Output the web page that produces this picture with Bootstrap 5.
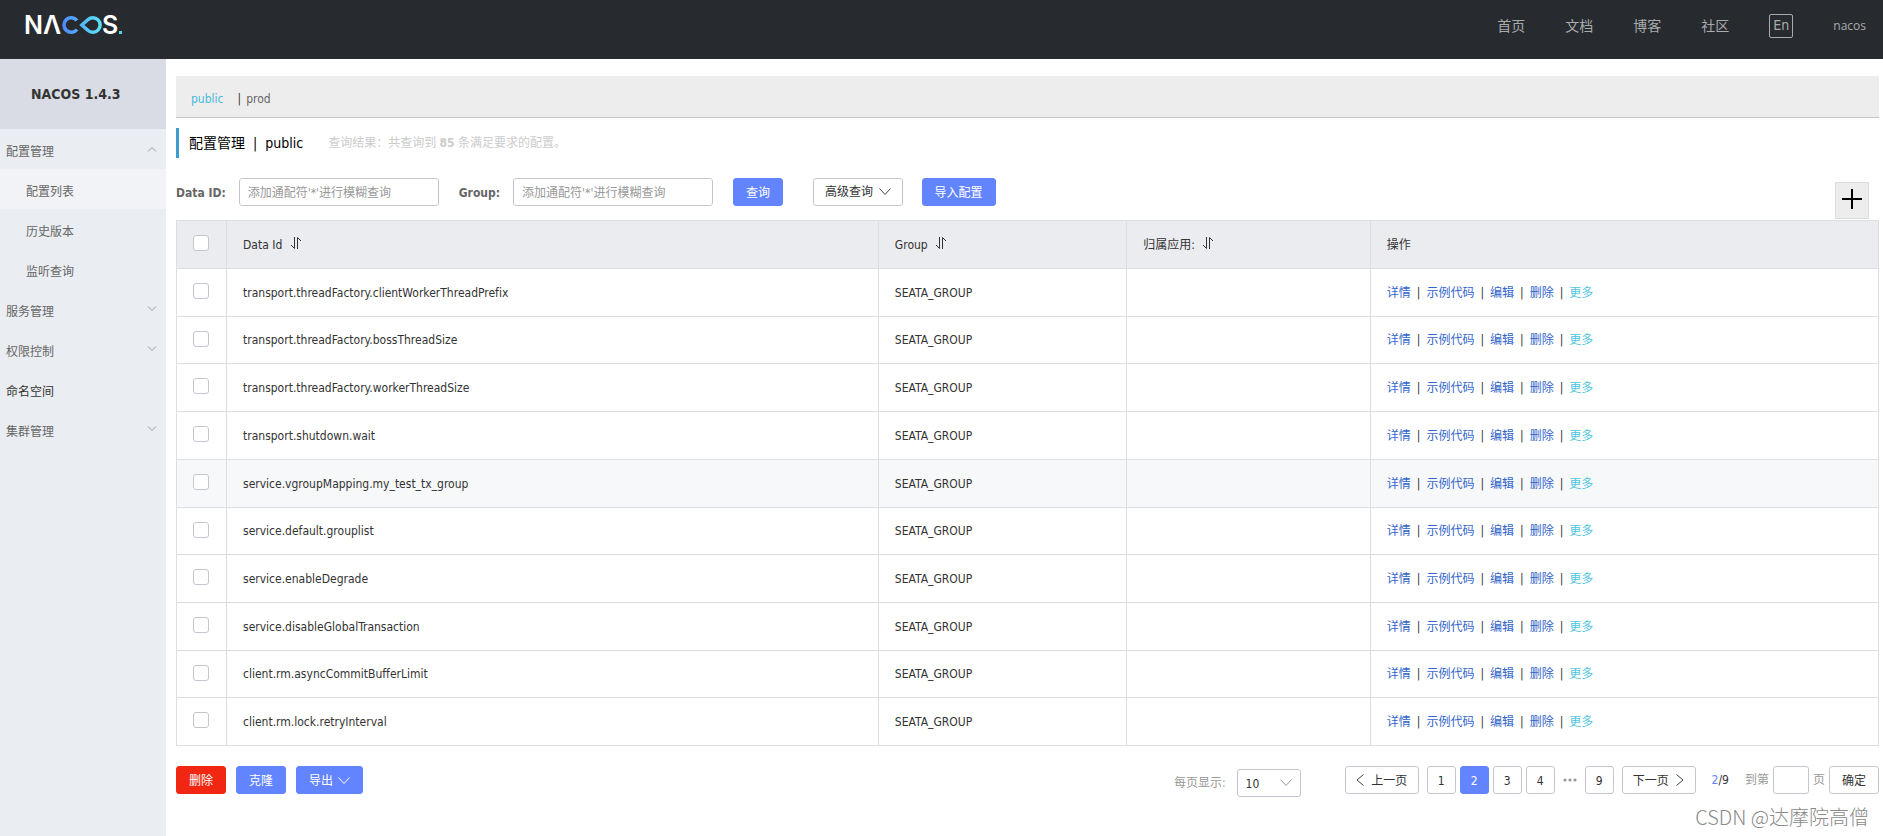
<!DOCTYPE html>
<html lang="zh-CN">
<head>
<meta charset="utf-8">
<meta name="viewport" content="width=device-width, initial-scale=1">
<title>Nacos</title>
<link href="https://cdn.jsdelivr.net/npm/bootstrap@5.3.0/dist/css/bootstrap.min.css" rel="stylesheet">
<style>
  body { font-family: "DejaVu Sans Condensed", "Noto Sans CJK SC", sans-serif; font-size: 12px; line-height: 18px; color: #333; background: #fff; font-variant-ligatures: none; }
  a { text-decoration: none; }
  .site-header { background: #272a2f; height: 59px; padding: 0 17px 0 24px; }
  .site-nav { gap: 40px; height: 52px; font-size: 14px; }
  .site-nav a { color: #a9aaac; }
  .site-nav .lang { border: 1px solid #a9aaac; border-radius: 2px; width: 24px; height: 24px; line-height: 20px; text-align: center; }
  .site-nav .user { font-size: 12px; font-family: "Open Sans", sans-serif; }
  .side { width: 166px; background: #eaedf1; }
  .side-title { height: 70px; line-height: 70px; background: #d9dce4; font-size: 14px; font-weight: 700; padding-left: 31px; margin: 0; }
  .side a { height: 40px; padding: 6px 9px 0 6px; color: #666; }
  .side a.child { padding-left: 26px; }
  .side a.current { background: #f1f3f7; }
  .side a.plain { color: #333; }
  .side svg { margin-bottom: 6px; }
  .work { padding: 17px 4px 0 10px; min-width: 0; }
  .ns-bar { background: #ededed; border-bottom: 1px solid #c8c8c8; height: 42px; padding: 5px 15px 0; }
  .ns-bar a { color: #666; }
  .ns-bar a.on { color: #49b9d8; margin-right: 14px; }
  .ns-bar span { margin-right: 5px; }
  .page-title { height: 30px; margin: 10px 0 20px; padding-left: 10px; border-left: 3px solid #3c9dce; color: #000; font-size: 14px; font-weight: 400; }
  .page-title small { color: #ccc; font-size: 12px; margin-left: 25px; }
  .filters { height: 42px; }
  .filters label { font-weight: 700; color: #666; padding-top: 2px; margin-right: 13px; }
  .ctl { height: 28px; border: 1px solid #c4c6cf; border-radius: 3px; padding: 2px 8px 0; font-size: 12px; line-height: 18px; color: #333; background-color: #fff; }
  .ctl:focus { box-shadow: none; border-color: #6384ff; }
  .ctl::placeholder { color: #999; opacity: 1; }
  input.term { width: 200px; margin-right: 20px; }
  .bt { height: 28px; border-radius: 3px; padding: 2px 12px 0; font-size: 12px; line-height: 18px; color: #333; background: #fff; border: 1px solid #c4c6cf; white-space: nowrap; }
  .bt.blue { background: #6384ff; border-color: #6384ff; color: #fff; }
  .bt.red { background: #f12714; border-color: #f12714; color: #fff; }
  .bt.adv { margin: 0 19px 0 30px; padding: 0 11px; }
  .bt.add { width: 34px; height: 37px; margin: 4px 10px 0 0; background: #ededed; border-color: #dcdcdc; border-radius: 0; padding: 0 0 3px; color: #000; }
  .chev { margin-left: 2px; margin-bottom: 2px; }
  .configs { table-layout: fixed; margin: 0; border-color: #dcdee3; color: #333; }
  .configs > :not(caption) > * > * { padding: 0 16px; height: 48px; box-shadow: none; vertical-align: middle; }
  .configs > tbody > tr:nth-child(4n+2):not(:last-child) > * { height: 47px; }
  .configs > tbody > tr:nth-child(9) > * { height: 47px; }
  .configs th { background: #ebecf0; font-weight: 400; }
  .configs > :not(caption) > * > .tick { padding: 0 1px 4px 0; text-align: center; }
  .configs tr.over td { background: #f7f8fa; }
  .configs .form-check-input { width: 16px; height: 16px; margin: 0; border: 1px solid #c4c6cf; border-radius: 3px; vertical-align: middle; }
  .configs .c-id { width: 38.3%; } .configs .c-group { width: 14.6%; } .configs .c-app { width: 14.3%; } .configs .c-tick { width: 50px; }
  .ops { gap: 6px; }
  .ops a { color: #3265cb; }
  .ops a.more { color: #52c5e0; }
  .foot { padding-top: 20px; }
  .bulk { gap: 10px; }
  .muted { color: #999; }
  .pg { gap: 4px; }
  .pg .num { width: 29px; padding: 2px 0 0; text-align: center; }
  .pg .step { width: 74px; padding: 2px 0 0; }
  .pg .ok { width: 50px; padding: 2px 0 0; }
  .pg .ctl { width: 36px; }
  .pg .now { color: #6384ff; }
  .size { margin: 3px 44px 0 0; }
  .size label { margin-right: 11px; }
  .size .ctl { width: 64px; appearance: none; background: #fff url("data:image/svg+xml,%3Csvg xmlns='http://www.w3.org/2000/svg' width='12' height='8' fill='none' stroke='%23999'%3E%3Cpath d='M.5 .5 6 6.500 11.500 .5'/%3E%3C/svg%3E") no-repeat right 8px center; }
  .credit { right: 14px; bottom: 4px; font-size: 20px; line-height: 30px; color: #8a8a8a; font-family: "Noto Sans CJK SC", sans-serif; font-weight: 300; }
</style>
</head>
<body>
<div class="d-flex flex-column min-vh-100 position-relative">
  <header class="site-header d-flex justify-content-between">
    <a href="#" aria-label="NACOS">
      <svg width="100" height="44" viewBox="0 0 100 44" font-family="Inter, sans-serif" font-weight="600" font-size="25">
        <defs><linearGradient id="loop" gradientUnits="userSpaceOnUse" x1="38" y1="0" x2="78" y2="0"><stop offset="0" stop-color="#4f86ff"/><stop offset="1" stop-color="#5be6f5"/></linearGradient></defs>
        <text x="0" y="34" fill="#fff">N</text>
        <text x="19" y="34" fill="#fff">Λ</text>
        <path d="M53 20.500A7.300 7.300 0 1 0 53 29.500M57.800 25L63.800 19.700A7.300 7.300 0 1 1 63.800 30.300Z" fill="none" stroke="url(#loop)" stroke-width="3.500"/>
        <text x="78" y="34" fill="#fff">S</text>
        <rect x="95" y="31" width="3" height="3" fill="#4fd6e8"/>
      </svg>
    </a>
    <nav class="site-nav d-flex align-items-center">
      <a href="#">首页</a><a href="#">文档</a><a href="#">博客</a><a href="#">社区</a>
      <a href="#" class="lang">En</a><a href="#" class="user">nacos</a>
    </nav>
  </header>
  <div class="d-flex flex-grow-1">
    <aside class="side flex-shrink-0">
      <h1 class="side-title">NACOS 1.4.3</h1>
      <nav>
        <a href="#" class="d-flex align-items-center justify-content-between">配置管理<svg width="10" height="6" fill="none" stroke="#999"><path d="M1 5.500 5 1.500 9 5.500"/></svg></a>
        <a href="#" class="d-flex align-items-center child current">配置列表</a>
        <a href="#" class="d-flex align-items-center child">历史版本</a>
        <a href="#" class="d-flex align-items-center child">监听查询</a>
        <a href="#" class="d-flex align-items-center justify-content-between">服务管理<svg width="10" height="6" fill="none" stroke="#999"><path d="M1 .5 5 4.500 9 .5"/></svg></a>
        <a href="#" class="d-flex align-items-center justify-content-between">权限控制<svg width="10" height="6" fill="none" stroke="#999"><path d="M1 .5 5 4.500 9 .5"/></svg></a>
        <a href="#" class="d-flex align-items-center plain">命名空间</a>
        <a href="#" class="d-flex align-items-center justify-content-between">集群管理<svg width="10" height="6" fill="none" stroke="#999"><path d="M1 .5 5 4.500 9 .5"/></svg></a>
      </nav>
    </aside>
    <main class="work flex-grow-1">
      <div class="ns-bar d-flex align-items-center">
        <a href="#" class="on">public</a><span>|</span><a href="#">prod</a>
      </div>
      <h2 class="page-title d-flex align-items-center">配置管理<span class="mx-2">|</span>public<small>查询结果：共查询到 <b>85</b> 条满足要求的配置。</small></h2>
      <form class="filters d-flex align-items-start justify-content-between" onsubmit="return false">
        <div class="d-flex align-items-center">
          <label for="dataId">Data ID:</label>
          <input id="dataId" class="form-control ctl term" placeholder="添加通配符'*'进行模糊查询">
          <label for="group">Group:</label>
          <input id="group" class="form-control ctl term" placeholder="添加通配符'*'进行模糊查询">
          <button type="button" class="bt blue">查询</button>
          <button type="button" class="bt adv">高级查询 <svg class="chev" width="12" height="8" fill="none" stroke="#444"><path d="M.5 .5 6 6.500 11.500 .5"/></svg></button>
          <button type="button" class="bt blue">导入配置</button>
        </div>
        <button type="button" class="bt add" aria-label="新建配置"><svg width="20" height="20" fill="none" stroke="#000" stroke-width="2"><path d="M0 10h20M10 0v20"/></svg></button>
      </form>
      <table class="table table-bordered configs">
        <colgroup><col class="c-tick"><col class="c-id"><col class="c-group"><col class="c-app"><col></colgroup>
        <thead>
          <tr>
            <th class="tick"><input type="checkbox" class="form-check-input" aria-label="全选"></th>
            <th>Data Id <svg class="ms-1 mb-1" width="12" height="12" fill="none" stroke="#333"><path d="M4.500 0v11.500L1 8M7.500 12V.5L11 4"/></svg></th>
            <th>Group <svg class="ms-1 mb-1" width="12" height="12" fill="none" stroke="#333"><path d="M4.500 0v11.500L1 8M7.500 12V.5L11 4"/></svg></th>
            <th>归属应用: <svg class="ms-1 mb-1" width="12" height="12" fill="none" stroke="#333"><path d="M4.500 0v11.500L1 8M7.500 12V.5L11 4"/></svg></th>
            <th>操作</th>
          </tr>
        </thead>
        <tbody id="rows"></tbody>
      </table>
      <div class="foot d-flex justify-content-between align-items-start">
        <div class="bulk d-flex">
          <button type="button" class="bt red">删除</button>
          <button type="button" class="bt blue">克隆</button>
          <button type="button" class="bt blue">导出 <svg class="chev" width="12" height="8" fill="none" stroke="#fff"><path d="M.5 .5 6 6.500 11.500 .5"/></svg></button>
        </div>
        <div class="d-flex align-items-start">
          <div class="size d-flex align-items-center">
            <label for="size" class="muted">每页显示:</label>
            <select id="size" class="ctl"><option>10</option><option>20</option><option>50</option></select>
          </div>
          <div class="pg d-flex align-items-center">
            <button type="button" class="bt step me-1"><svg class="me-1 mb-1" width="8" height="12" fill="none" stroke="#444"><path d="M7.500 .5 1 6l6.500 5.500"/></svg> 上一页</button>
            <button type="button" class="bt num">1</button>
            <button type="button" class="bt num blue">2</button>
            <button type="button" class="bt num">3</button>
            <button type="button" class="bt num">4</button>
            <svg class="mx-1" width="14" height="4" fill="#999"><circle cx="2" cy="2" r="1.600"/><circle cx="7" cy="2" r="1.600"/><circle cx="12" cy="2" r="1.600"/></svg>
            <button type="button" class="bt num">9</button>
            <button type="button" class="bt step ms-1">下一页 <svg class="ms-1 mb-1" width="8" height="12" fill="none" stroke="#444"><path d="M.5 .5 7 6 .5 11.500"/></svg></button>
            <span class="mx-2 px-1"><span class="now">2</span>/9</span>
            <label for="jump" class="muted">到第</label>
            <input id="jump" class="form-control ctl">
            <span class="muted">页</span>
            <button type="button" class="bt ok">确定</button>
          </div>
        </div>
      </div>
    </main>
  </div>
  <div class="credit position-absolute">CSDN @达摩院高僧</div>
</div>
<script src="https://cdn.jsdelivr.net/npm/bootstrap@5.3.0/dist/js/bootstrap.bundle.min.js"></script>
<script>
  const ids = [
    'transport.threadFactory.clientWorkerThreadPrefix', 'transport.threadFactory.bossThreadSize',
    'transport.threadFactory.workerThreadSize', 'transport.shutdown.wait',
    'service.vgroupMapping.my_test_tx_group', 'service.default.grouplist',
    'service.enableDegrade', 'service.disableGlobalTransaction',
    'client.rm.asyncCommitBufferLimit', 'client.rm.lock.retryInterval'
  ];
  document.getElementById('rows').innerHTML = ids.map((id, i) => `
    <tr class="${i === 4 ? 'over' : ''}">
      <td class="tick"><input type="checkbox" class="form-check-input" aria-label="${id}"></td>
      <td>${id}</td><td>SEATA_GROUP</td><td></td>
      <td><div class="ops d-flex"><a href="#">详情</a>|<a href="#">示例代码</a>|<a href="#">编辑</a>|<a href="#">删除</a>|<a href="#" class="more">更多</a></div></td>
    </tr>`).join('');
</script>
</body>
</html>
